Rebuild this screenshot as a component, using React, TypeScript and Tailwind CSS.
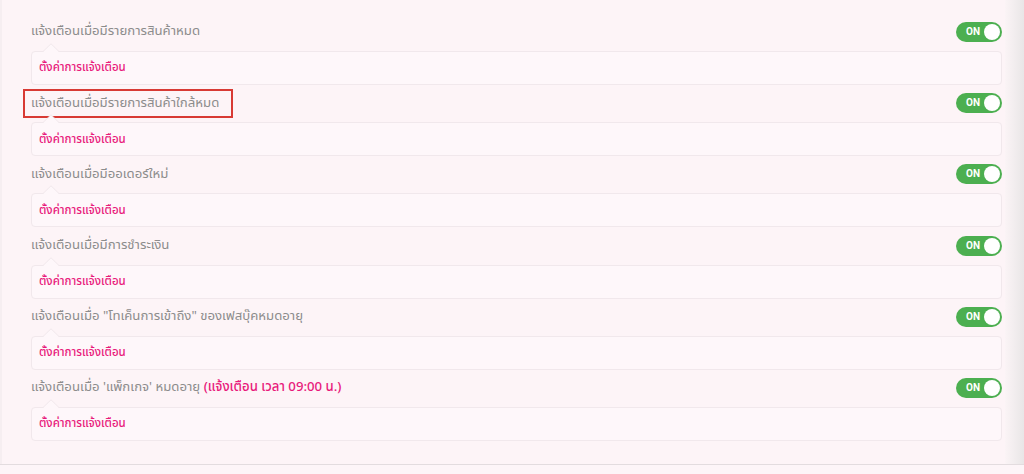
import React from "react";

const FONT = '"Noto Sans Thai", "Noto Sans", "Liberation Sans", sans-serif';

function Toggle() {
  return (
    <div className="flex h-[20px] w-[46px] items-center justify-between rounded-full bg-[#4caf50] pl-[10px] pr-[2px]">
      <span className="text-[10px] font-bold leading-none text-white" style={{ fontFamily: '"Roboto", sans-serif' }}>ON</span>
      <span className="h-[16px] w-[16px] rounded-full bg-white" />
    </div>
  );
}

function Row({ title, highlight }: { title: React.ReactNode; highlight?: boolean }) {
  return (
    <div className="relative flex h-[71.2px] flex-col">
      {highlight && (
        <div className="absolute left-[-8px] top-[-4px] h-[29px] w-[210px] border-2 border-[#d83a34]" />
      )}
      <div className="flex h-[20px] items-center justify-between">
        <div className="text-[13.2px] leading-none text-[#8c8c8c]">{title}</div>
        <Toggle />
      </div>
      <div className="relative mt-[9px] flex h-[34px] items-center rounded-[4px] border border-[#f1e8ec] bg-[#fef7fa] pl-[7px]">
        <svg className="absolute left-[11px] top-[-9px]" width="16" height="9" viewBox="0 0 16 9">
          <polygon points="0,9 8,1 16,9" fill="#fef7fa" />
          <polyline points="0,8.5 8,0.8 16,8.5" fill="none" stroke="#f1e8ec" strokeWidth="1" />
        </svg>
        <span className="text-[11.5px] font-medium text-[#e8197b]">ตั้งค่าการแจ้งเตือน</span>
      </div>
    </div>
  );
}

export default function App() {
  return (
    <div className="flex h-[474px] w-[1024px] flex-col overflow-hidden bg-[#fdf4f7]" style={{ fontFamily: FONT }}>
      <div className="flex h-[464px] flex-row">
        <div className="w-[2px] bg-[#f6eef1]" />
        <div className="flex flex-1 flex-col pl-[29px] pr-[3px] pt-[22px]">
          <Row title="แจ้งเตือนเมื่อมีรายการสินค้าหมด" />
          <Row title="แจ้งเตือนเมื่อมีรายการสินค้าใกล้หมด" highlight />
          <Row title="แจ้งเตือนเมื่อมีออเดอร์ใหม่" />
          <Row title="แจ้งเตือนเมื่อมีการชำระเงิน" />
          <Row title={'แจ้งเตือนเมื่อ "โทเค็นการเข้าถึง" ของเฟสบุ๊คหมดอายุ'} />
          <Row
            title={
              <>
                แจ้งเตือนเมื่อ 'แพ็กเกจ' หมดอายุ{" "}
                <span className="font-medium text-[#e8197b]">(แจ้งเตือน เวลา 09:00 น.)</span>
              </>
            }
          />
        </div>
        <div className="w-[19px] bg-gradient-to-r from-[#fbf4f6] to-[#e9e6e7]" />
      </div>
      <div className="h-[1px] bg-[#e3dcdf]" />
      <div className="flex-1 bg-[#fdf5f8]" />
    </div>
  );
}
